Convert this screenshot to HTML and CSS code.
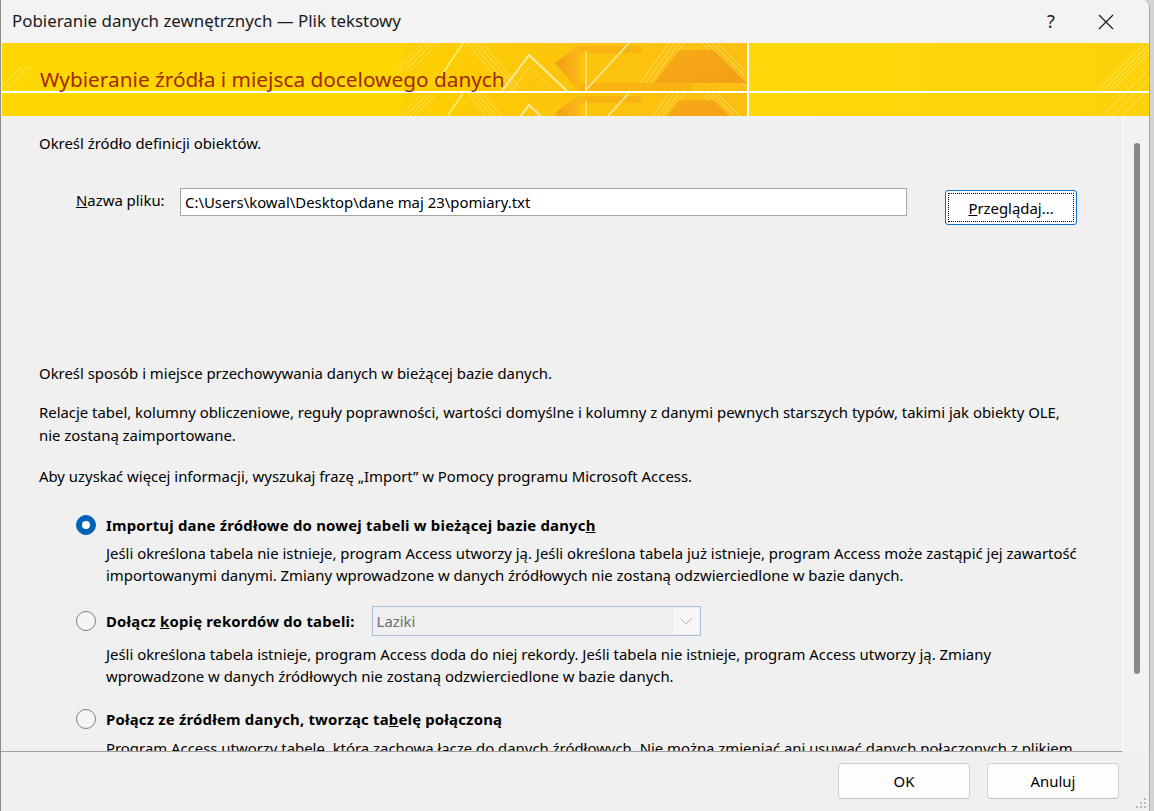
FILE: index.html
```html
<!DOCTYPE html>
<html lang="pl">
<head>
<meta charset="utf-8">
<title>Pobieranie danych zewnętrznych — Plik tekstowy</title>
<link rel="stylesheet" href="styles.css">
</head>
<body>
<div class="window">
  <div class="titlebar">
    <span class="title">Pobieranie danych zewnętrznych — Plik tekstowy</span>
    <span class="help">?</span>
    <span class="close"><svg width="16" height="16" viewBox="0 0 16 16"><path d="M1 1L15 15M15 1L1 15" stroke="#1b1b1b" stroke-width="1.2" fill="none"/></svg></span>
  </div>

  <div class="banner">
    <svg class="banner-art" width="1147" height="73" viewBox="0 0 1147 73" preserveAspectRatio="none">
      <defs>
        <linearGradient id="gMid" x1="0" y1="0" x2="1" y2="0">
          <stop offset="0" stop-color="#fdd000"/>
          <stop offset="0.5" stop-color="#fcc40c"/>
          <stop offset="1" stop-color="#fbbf12"/>
        </linearGradient>
        <linearGradient id="gArrow" x1="0" y1="0" x2="1" y2="0">
          <stop offset="0" stop-color="#f39a17"/>
          <stop offset="1" stop-color="#fbb914"/>
        </linearGradient>
        <linearGradient id="gTrap" x1="0" y1="0" x2="1" y2="1">
          <stop offset="0" stop-color="#f7ab16"/>
          <stop offset="1" stop-color="#f39e17"/>
        </linearGradient>
        <linearGradient id="gRight" x1="0" y1="0" x2="1" y2="0">
          <stop offset="0" stop-color="#fed80a"/>
          <stop offset="1" stop-color="#fdd20a"/>
        </linearGradient>
        <g id="midArt">
          <rect x="400" y="0" width="347" height="48" fill="url(#gMid)"/>
          <g stroke="#fde58a" stroke-width="1" opacity="0.7">
            <path d="M398 28L426 0M403 28L431 0M408 28L436 0M393 28L421 0"/>
            <path d="M465 0L505 47M470 0L510 47M475 0L515 47M480 0L520 47"/>
            <path d="M633 48L667 0M638 48L672 0M643 48L677 0M648 48L682 0"/>
            <path d="M700 0L743 43M705 0L743 38M710 0L743 33M715 0L743 28"/>
          </g>
          <path d="M433 42L461 0" stroke="#fff27a" stroke-width="1.5"/>
          <polygon points="577,3 640,3 640,10 577,10" fill="#f9b412"/>
          <polygon points="577,40 690,40 690,48 577,48" fill="#f9b412"/>
          <polygon points="553,20 577,2 577,48" fill="url(#gArrow)"/>
          <polygon points="677,7 712,7 745,40 652,40" fill="url(#gTrap)"/>
          <path d="M500 48L527 12L565 48" stroke="#fde9a0" stroke-width="2" fill="none"/>
          <path d="M510 48L527 24L552 48" stroke="#fde27a" stroke-width="1" fill="none" opacity="0.7"/>
          <path d="M584 8V48" stroke="#fde58a" stroke-width="1.5"/>
          <path d="M583 48L627 0" stroke="#fde9a0" stroke-width="1.5"/>
        </g>
      </defs>
      <rect x="0" y="0" width="1147" height="73" fill="#fed600"/>
      <g stroke="#fff0a0" stroke-width="1" opacity="0.5">
        <path d="M0 43L20 23M0 49L26 23M5 48L30 23"/>
      </g>
      <use href="#midArt"/>
      <use href="#midArt" transform="translate(0,50)"/>
      <rect x="747" y="0" width="400" height="73" fill="url(#gRight)"/>
      <g stroke="#fff0a0" stroke-width="1" opacity="0.6">
        <path d="M1100 48L1147 1M1105 48L1147 6M1110 48L1147 11M1095 48L1145 -2M1100 73L1147 26M1110 73L1147 36M1120 73L1147 46"/>
      </g>
      <rect x="0" y="48" width="1147" height="2" fill="#ffffff"/>
      <rect x="745" y="0" width="2" height="73" fill="#ffffff"/>
    </svg>
    <h1 class="banner-title">Wybieranie źródła i miejsca docelowego danych</h1>
  </div>

  <div class="body">
    <div class="content">
      <p class="p-first">Określ źródło definicji obiektów.</p>
      <div class="file-row">
        <label class="file-label"><u>N</u>azwa pliku:</label>
        <div class="file-input">C:\Users\kowal\Desktop\dane maj 23\pomiary.txt</div>
        <button class="browse"><span class="focus-ring"><u>P</u>rzeglądaj...</span></button>
      </div>
      <p class="p-store">Określ sposób i miejsce przechowywania danych w bieżącej bazie danych.</p>
      <p class="p-rel">Relacje tabel, kolumny obliczeniowe, reguły poprawności, wartości domyślne i kolumny z danymi pewnych starszych typów, takimi jak obiekty OLE,<br>nie zostaną zaimportowane.</p>
      <p class="p-info">Aby uzyskać więcej informacji, wyszukaj frazę „Import” w Pomocy programu Microsoft Access.</p>

      <div class="option opt1">
        <div class="opt-row">
          <span class="radio checked"></span>
          <span class="opt-label">Importuj dane źródłowe do nowej tabeli w bieżącej bazie danyc<u>h</u></span>
        </div>
        <p class="opt-desc">Jeśli określona tabela nie istnieje, program Access utworzy ją. Jeśli określona tabela już istnieje, program Access może zastąpić jej zawartość<br>importowanymi danymi. Zmiany wprowadzone w danych źródłowych nie zostaną odzwierciedlone w bazie danych.</p>
      </div>

      <div class="option opt2">
        <div class="opt-row">
          <span class="radio"></span>
          <span class="opt-label">Dołącz <u>k</u>opię rekordów do tabeli:</span>
          <div class="combo">
            <span class="combo-text">Laziki</span>
            <span class="combo-btn"><svg width="12" height="7" viewBox="0 0 12 7"><path d="M0.5 0.5L6 6L11.5 0.5" stroke="#b0b0b0" stroke-width="1" fill="none"/></svg></span>
          </div>
        </div>
        <p class="opt-desc">Jeśli określona tabela istnieje, program Access doda do niej rekordy. Jeśli tabela nie istnieje, program Access utworzy ją. Zmiany<br>wprowadzone w danych źródłowych nie zostaną odzwierciedlone w bazie danych.</p>
      </div>

      <div class="option opt3">
        <div class="opt-row">
          <span class="radio"></span>
          <span class="opt-label">Połącz ze źródłem danych, tworząc ta<u>b</u>elę połączoną</span>
        </div>
        <p class="opt-desc">Program Access utworzy tabelę, która zachowa łącze do danych źródłowych. Nie można zmieniać ani usuwać danych połączonych z plikiem<br>tekstowym w programie Access. Jednak można dodawać nowe rekordy.</p>
      </div>
    </div>
    <div class="scrollbar"><div class="thumb"></div></div>
  </div>

  <div class="footer">
    <button class="btn">OK</button>
    <button class="btn">Anuluj</button>
    <svg class="grip" width="10" height="10" viewBox="0 0 10 10"><g fill="#b8b8b8"><rect x="8" y="0" width="2" height="2"/><rect x="4" y="4" width="2" height="2"/><rect x="8" y="4" width="2" height="2"/><rect x="0" y="8" width="2" height="2"/><rect x="4" y="8" width="2" height="2"/><rect x="8" y="8" width="2" height="2"/></g></svg>
  </div>
</div>
</body>
</html>
```

FILE: styles.css
```css
* { box-sizing: border-box; }
html, body { margin: 0; padding: 0; }
body {
  width: 1154px;
  height: 811px;
  overflow: hidden;
  background: #d4d4d4;
  font-family: "Noto Sans", "Open Sans", sans-serif;
  color: #000;
}
.window {
  position: relative;
  width: 1150px;
  height: 811px;
  background: #f0f0f0;
  border-left: 1px solid #8c8c8c;
  border-right: 1px solid #a4a4a4;
  border-top-right-radius: 8px;
  display: flex;
  flex-direction: column;
  overflow: hidden;
}
.titlebar {
  height: 43px;
  flex: none;
  background: #f3f3f3;
  display: flex;
  align-items: center;
  padding-left: 11px;
}
.title {
  font-size: 16.9px;
  color: #1a1a1a;
  flex: 1;
  padding-bottom: 2px;
}
.help {
  font-size: 18px;
  color: #1a1a1a;
  width: 70px;
  text-align: center;
  padding-bottom: 2px;
}
.close {
  width: 40px;
  margin-right: 23px;
  display: flex;
  justify-content: center;
}
.banner {
  position: relative;
  height: 73px;
  flex: none;
  margin-left: 1px;
  display: flex;
  align-items: flex-start;
}
.banner-art {
  position: absolute;
  left: 0;
  top: 0;
}
.banner-title {
  position: relative;
  margin: 21px 0 0 38px;
  font-size: 20.8px;
  font-weight: normal;
  color: #9e2a06;
  line-height: 30px;
}
.body {
  height: 636px;
  flex: none;
  display: flex;
}
.content {
  width: 1122px;
  height: 636px;
  overflow: hidden;
  border-bottom: 1px solid #a0a0a0;
  border-right: 1px solid #ffffff;
  padding-left: 38px;
  font-size: 14.9px;
  line-height: 22px;
}
.content p { margin: 0; }
.p-first { padding-top: 16px; }
.file-row {
  display: flex;
  align-items: flex-start;
  margin-top: 34px;
  height: 37px;
}
.file-label {
  flex: none;
  width: 141px;
  padding-left: 37px;
  line-height: 24px;
  white-space: nowrap;
}
.file-input {
  flex: none;
  width: 727px;
  height: 28px;
  background: #fff;
  border: 1px solid #a5a5a5;
  padding-left: 4px;
  line-height: 26px;
  white-space: nowrap;
}
.browse {
  flex: none;
  margin-left: 38px;
  margin-top: 2px;
  width: 132px;
  height: 35px;
  background: #fdfdfd;
  border: 1px solid #0a6fcc;
  border-radius: 3px;
  padding: 2px;
  font: inherit;
  color: #000;
}
.focus-ring {
  display: flex;
  align-items: center;
  justify-content: center;
  height: 100%;
  border: 1px dotted #000;
}
.p-store { margin-top: 137px !important; }
.p-rel { margin-top: 17px !important; line-height: 23px; }
.p-info { margin-top: 18px !important; }
.option { padding-left: 37px; }
.opt-row {
  display: flex;
  align-items: center;
  height: 22px;
}
.opt1 { margin-top: 27px; }
.opt2 { margin-top: 20px; }
.opt2 .opt-row { height: 30px; }
.opt3 { margin-top: 21px; }
.radio {
  width: 20px;
  height: 20px;
  border-radius: 50%;
  border: 1px solid #808080;
  background: #f5f5f5;
  flex: none;
}
.radio.checked {
  background: #0063b8;
  border-color: #0063b8;
  position: relative;
}
.radio.checked::after {
  content: "";
  position: absolute;
  left: 5px;
  top: 5px;
  width: 8px;
  height: 8px;
  border-radius: 50%;
  background: #fff;
}
.opt-label {
  font-weight: bold;
  margin-left: 10px;
  white-space: nowrap;
  letter-spacing: 0.2px;
}
.opt-desc {
  padding-left: 30px;
  margin-top: 6px !important;
  white-space: nowrap;
}
.opt2 .opt-desc { margin-top: 7px !important; }
.opt3 .opt-desc { margin-top: 7px !important; }
.combo {
  flex: none;
  margin-left: 17px;
  width: 329px;
  height: 30px;
  border: 1px solid #a9bfd6;
  background: #f0f0f0;
  display: flex;
  align-items: center;
  padding: 1px;
}
.combo-text {
  flex: 1;
  color: #6d6d6d;
  padding-left: 3px;
}
.combo-btn {
  width: 25px;
  height: 26px;
  background: #f7f7f7;
  display: flex;
  align-items: center;
  justify-content: center;
}
.scrollbar {
  width: 26px;
  height: 635px;
  position: relative;
  background: #f2f2f2;
  display: flex;
  justify-content: center;
  padding-top: 27px;
}
.thumb {
  width: 6px;
  height: 531px;
  background: #888888;
  border-radius: 3px;
  margin-left: 1px;
}
.footer {
  position: relative;
  flex: 1;
  display: flex;
  justify-content: flex-end;
  align-items: flex-start;
  padding-top: 11px;
  padding-right: 30px;
  gap: 17px;
}
.btn {
  width: 132px;
  height: 36px;
  background: #fdfdfd;
  border: 1px solid #d0d0d0;
  border-bottom-color: #c0c0c0;
  border-radius: 4px;
  font: inherit;
  font-size: 14.9px;
  color: #000;
}
.grip {
  position: absolute;
  right: 3px;
  bottom: 3px;
}
```
